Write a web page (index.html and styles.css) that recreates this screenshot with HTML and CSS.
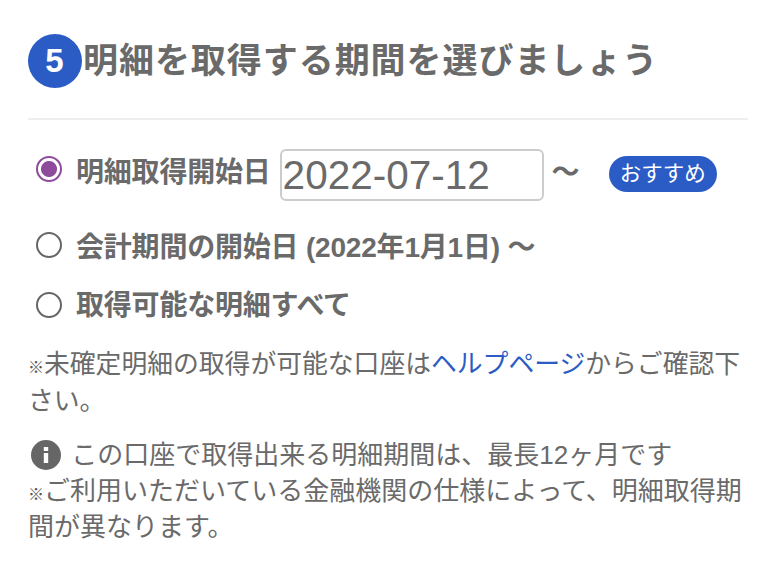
FILE: index.html
```html
<!DOCTYPE html>
<html lang="ja">
<head>
	<meta charset="utf-8">
	<title>明細を取得する期間</title>
	<link rel="stylesheet" href="styles.css">
</head>
<body>
	<div class="period">
		<h2 class="period-title"><span class="step-number">5</span>明細を取得する期間を選びましょう</h2>
		<div class="option option-first">
			<span class="radio radio-checked"></span>
			<span class="option-label">明細取得開始日</span>
			<input class="date-input" type="text" value="2022-07-12">
			<span class="date-tilde">〜</span>
			<span class="badge">おすすめ</span>
		</div>
		<div class="option">
			<span class="radio"></span>
			<span class="option-label">会計期間の開始日 (2022年1月1日) 〜</span>
		</div>
		<div class="option option-last">
			<span class="radio"></span>
			<span class="option-label">取得可能な明細すべて</span>
		</div>
		<p class="note"><b class="mark">※</b>未確定明細の取得が可能な口座は<a href="#">ヘルプページ</a>からご確認下さい。</p>
		<p class="note note-info">
			<svg class="info-icon" viewBox="0 0 30 30" width="30" height="30"><circle cx="15" cy="15" r="15" fill="#666"/><rect x="12.8" y="7" width="4.4" height="4" fill="#fff"/><rect x="12.8" y="13" width="4.4" height="10" fill="#fff"/></svg>
			この口座で取得出来る明細期間は、最長12ヶ月です<br>
			<b class="mark">※</b>ご利用いただいている金融機関の仕様によって、明細取得期間が異なります。
		</p>
	</div>
</body>
</html>
```

FILE: styles.css
```css
* {
	box-sizing: border-box;
}
body {
	margin: 0;
	background: #fff;
	color: #6a6a6a;
	font-family: "Liberation Sans", "Noto Sans CJK JP", sans-serif;
}
.period {
	padding: 34px 28px 0;
}
.period-title {
	display: flex;
	align-items: center;
	margin: 0;
	padding-bottom: 30px;
	border-bottom: 2px solid #eee;
	font-size: 35px;
	line-height: 54px;
	letter-spacing: 0.95px;
}
.step-number {
	flex: none;
	width: 54px;
	height: 54px;
	margin-right: 1px;
	border-radius: 50%;
	background: #2b5cc5;
	color: #fff;
	font-size: 33px;
	text-align: center;
	line-height: 54px;
}
.option {
	display: flex;
	align-items: center;
	height: 60px;
	padding-left: 8px;
}
.option-first {
	align-items: flex-start;
	height: 52px;
	margin-top: 29px;
	margin-bottom: 14px;
}
.radio {
	flex: none;
	width: 26px;
	height: 26px;
	margin-right: 14px;
	border: 2px solid #666;
	border-radius: 50%;
	background: #fff;
}
.radio-checked {
	margin-top: 7px;
	border-color: #8e4a9b;
	background: radial-gradient(circle, #8e4a9b 0 7.5px, #fff 8.5px);
}
.option-label {
	font-size: 28px;
	font-weight: bold;
	letter-spacing: -0.2px;
}
.option-first .option-label {
	line-height: 48px;
}
.option-last .option-label {
	margin-bottom: 4px;
}
.date-input {
	width: 264px;
	height: 52px;
	margin-left: 9px;
	padding: 0 1px;
	border: 2px solid #ccc;
	border-radius: 6px;
	color: #6a6a6a;
	font-family: inherit;
	font-size: 40.5px;
}
.date-tilde {
	margin-left: 8px;
	font-size: 28px;
	font-weight: bold;
	line-height: 48px;
}
.badge {
	margin-top: 7px;
	margin-left: 29px;
	padding: 0 11px;
	border-radius: 18px;
	background: #2b5cc5;
	color: #fff;
	font-size: 21.5px;
	line-height: 36px;
}
.note {
	margin: 11px 0 0;
	font-size: 25.8px;
	line-height: 36.5px;
}
.note a {
	color: #2b5cc5;
	text-decoration: none;
}
.mark {
	font-size: 16px;
	line-height: 1;
	color: #555;
}
.info-icon {
	vertical-align: -6px;
	margin: 0 3px 0 3px;
}
.note-info {
	margin-top: 18px;
	font-size: 26px;
	line-height: 36px;
}
```
